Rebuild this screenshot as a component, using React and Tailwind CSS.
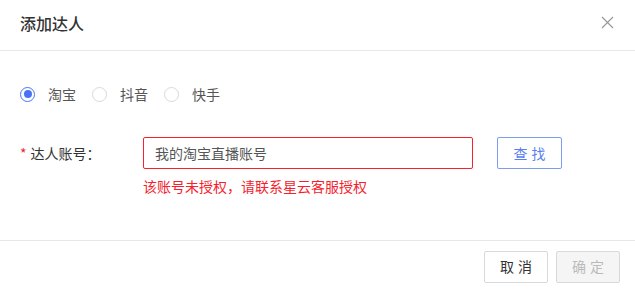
import React from 'react';

function Radio({ label, checked }) {
  return (
    <label className="flex items-center gap-[13px] cursor-pointer">
      <span
        className={`w-[15px] h-[15px] rounded-full border flex items-center justify-center ${
          checked ? 'border-[#4a74f5]' : 'border-[#d9d9d9]'
        }`}
      >
        {checked && <span className="w-[8px] h-[8px] rounded-full bg-[#4a74f5]" />}
      </span>
      <span className="text-[14px] text-[#555]">{label}</span>
    </label>
  );
}

export default function App() {
  return (
    <div className="w-[635px] h-[292px] bg-white flex flex-col font-['Noto_Sans_CJK_SC',sans-serif]">
      {/* header */}
      <div className="h-[51px] flex items-center justify-between pl-[20px] pr-[21px] pb-[5px] border-b border-[#e8e8e8]">
        <h2 className="text-[16px] font-medium text-[#333]">添加达人</h2>
        <svg width="13" height="13" viewBox="0 0 13 13" className="text-[#999]">
          <path d="M1 1L12 12M12 1L1 12" stroke="currentColor" strokeWidth="1.2" />
        </svg>
      </div>

      {/* body */}
      <div className="flex-1 px-[20px] pt-[33px]">
        <div className="flex items-center gap-[16px] h-[20px]">
          <Radio label="淘宝" checked />
          <Radio label="抖音" />
          <Radio label="快手" />
        </div>

        <div className="flex items-start mt-[33px]">
          <div className="w-[123px] h-[32px] flex items-center text-[14px] text-[#333]">
            <span className="text-[#f5222d] mr-[4px]">*</span>达人账号：
          </div>
          <div className="flex flex-col">
            <input
              className="w-[330px] h-[32px] border border-[#f5222d] rounded-[2px] px-[11px] text-[14px] text-[#555] outline-none"
              defaultValue="我的淘宝直播账号"
            />
            <div className="text-[14px] text-[#f5222d] mt-[6px] leading-[22px]">
              该账号未授权，请联系星云客服授权
            </div>
          </div>
          <button className="ml-[24px] w-[65px] h-[32px] border border-[#7b9cf0] rounded-[2px] text-[14px] text-[#5a7ff0] tracking-[4px] pl-[4px]">
            查找
          </button>
        </div>
      </div>

      {/* footer */}
      <div className="h-[52px] border-t border-[#e8e8e8] flex items-center justify-end gap-[8px] pr-[15px]">
        <button className="w-[64px] h-[32px] border border-[#d9d9d9] rounded-[2px] text-[14px] text-[#333] tracking-[4px] pl-[4px]">
          取消
        </button>
        <button className="w-[64px] h-[32px] border border-[#d9d9d9] bg-[#f5f5f5] rounded-[2px] text-[14px] text-[#bbb] tracking-[4px] pl-[4px]">
          确定
        </button>
      </div>
    </div>
  );
}
